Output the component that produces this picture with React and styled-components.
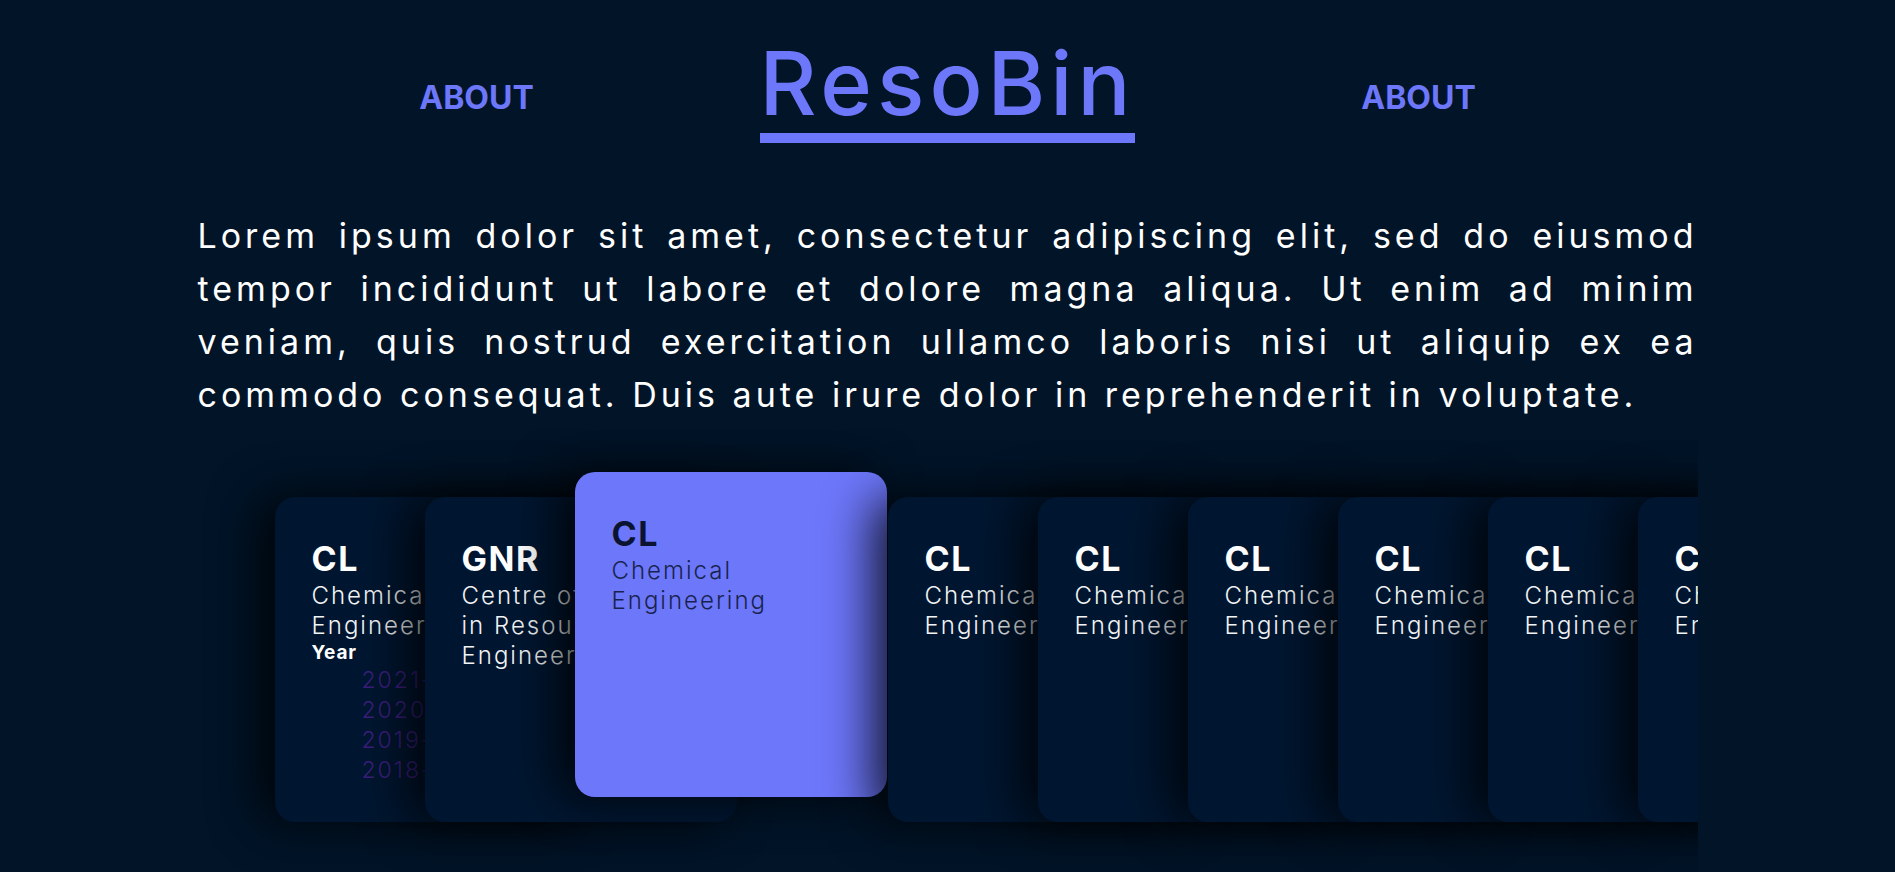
import React from 'react';
import styled, { createGlobalStyle } from 'styled-components';

const GlobalStyle = createGlobalStyle`
  html, body {
    margin: 0;
    padding: 0;
    background: #011428;
  }

  body {
    font-family: Inter, "Noto Sans", sans-serif;
    color: #fff;
    overflow: hidden;
  }
`;

const Page = styled.div`
  display: flex;
  flex-direction: column;
  align-items: center;
  min-height: 100vh;
`;

const Header = styled.header`
  display: grid;
  grid-template-columns: repeat(3, 471px);
  justify-items: center;
  align-items: center;
  padding-top: 39px;
`;

const NavLink = styled.a`
  padding-top: 12px;
  font-size: 32px;
  font-weight: 700;
  color: #6d77fa;
  text-decoration: none;
  cursor: pointer;
`;

const Logo = styled.a`
  display: inline-block;
  font-size: 88px;
  font-weight: 500;
  line-height: 88px;
  letter-spacing: 5px;
  color: #6d77fa;
  text-decoration: none;
  padding-bottom: 6px;
  border-bottom: 10px solid #6d77fa;
`;

const Intro = styled.p`
  width: 1500px;
  margin: 66px 0 0;
  font-size: 34px;
  font-weight: 400;
  line-height: 53px;
  letter-spacing: 4px;
  text-align: justify;
`;

const Deck = styled.section`
  display: flex;
  width: 1500px;
  margin-top: 9px;
  padding: 67px 0 80px 77px;
  box-sizing: border-box;
  overflow: hidden;
`;

const Card = styled.article`
  position: relative;
  flex: 0 0 312px;
  height: 325px;
  box-sizing: border-box;
  padding: 42px 30px 0 37px;
  border-radius: 20px;
  background: ${(p) => (p.$active ? '#6d77fa' : '#001630')};
  color: ${(p) => (p.$active ? '#0a1430' : '#fff')};
  box-shadow: -16px 0 48px rgba(0, 0, 0, 0.8);
  transform: ${(p) =>
    p.$active ? 'translateY(-25px)' : p.$shifted ? 'translateX(163px)' : 'none'};

  & + & {
    margin-left: -162px;
  }
`;

const Code = styled.h3`
  margin: 0;
  font-size: 34px;
  font-weight: 700;
  line-height: 40px;
  letter-spacing: 1.5px;
`;

const Name = styled.p`
  margin: 2px 0 0;
  font-size: 24px;
  font-weight: 300;
  line-height: 30px;
  letter-spacing: 2px;
  opacity: ${(p) => (p.$active ? 0.85 : 0.95)};
`;

const YearLabel = styled.h4`
  margin: 0;
  font-size: 19px;
  font-weight: 700;
  line-height: 24px;
  letter-spacing: 0.8px;
`;

const YearList = styled.ul`
  margin: 0;
  padding-left: 50px;
  list-style: none;
`;

const YearItem = styled.li`
  font-size: 23px;
  font-weight: 300;
  line-height: 30px;
  letter-spacing: 2px;
  color: #3c1e7e;
  white-space: nowrap;
`;

const courses = [
  { code: 'CL', name: 'Chemical Engineering', years: ['2021-22', '2020-21', '2019-20', '2018-19'] },
  { code: 'GNR', name: 'Centre of Studies in Resources Engineering' },
  { code: 'CL', name: 'Chemical Engineering' },
  { code: 'CL', name: 'Chemical Engineering' },
  { code: 'CL', name: 'Chemical Engineering' },
  { code: 'CL', name: 'Chemical Engineering' },
  { code: 'CL', name: 'Chemical Engineering' },
  { code: 'CL', name: 'Chemical Engineering' },
  { code: 'CL', name: 'Chemical Engineering' },
  { code: 'CL', name: 'Chemical Engineering' },
];

const activeIndex = 2;

function App() {
  return (
    <>
      <GlobalStyle />
      <Page>
        <Header>
          <NavLink>ABOUT</NavLink>
          <Logo>ResoBin</Logo>
          <NavLink>ABOUT</NavLink>
        </Header>

        <Intro>
          Lorem ipsum dolor sit amet, consectetur adipiscing elit, sed do eiusmod tempor
          incididunt ut labore et dolore magna aliqua. Ut enim ad minim veniam, quis nostrud
          exercitation ullamco laboris nisi ut aliquip ex ea commodo consequat. Duis aute irure
          dolor in reprehenderit in voluptate.
        </Intro>

        <Deck>
          {courses.map((course, i) => (
            <Card key={i} $active={i === activeIndex} $shifted={i > activeIndex}>
              <Code>{course.code}</Code>
              <Name $active={i === activeIndex}>{course.name}</Name>
              {course.years && (
                <>
                  <YearLabel>Year</YearLabel>
                  <YearList>
                    {course.years.map((y) => (
                      <YearItem key={y}>{y}</YearItem>
                    ))}
                  </YearList>
                </>
              )}
            </Card>
          ))}
        </Deck>
      </Page>
    </>
  );
}

export default App;
